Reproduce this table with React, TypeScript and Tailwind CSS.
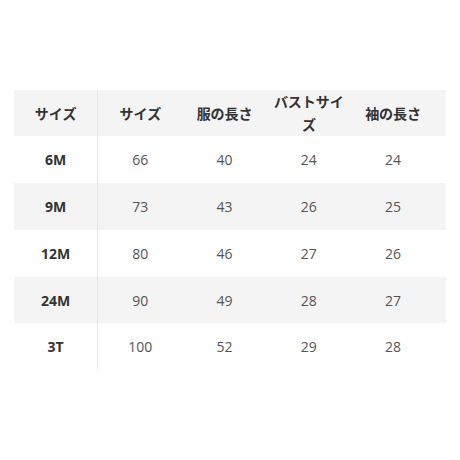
import React from "react";

const header = ["サイズ", "サイズ", "服の長さ", "バストサイズ", "袖の長さ"];
const rows = [
  ["6M", "66", "40", "24", "24"],
  ["9M", "73", "43", "26", "25"],
  ["12M", "80", "46", "27", "26"],
  ["24M", "90", "49", "28", "27"],
  ["3T", "100", "52", "29", "28"],
];
const heights = ["h-[47px]", "h-[47px]", "h-[47px]", "h-[46px]", "h-[47px]"];

export default function App() {
  return (
    <div
      className="w-[460px] h-[460px] bg-white pt-[90px] pl-[14px]"
      style={{ fontFamily: '"Open Sans", "Noto Sans CJK JP", sans-serif' }}
    >
      <div className="w-[432px] flex flex-col">
        <div className="flex h-[46px] bg-[#f4f4f4] text-[14px] font-bold text-[#333] leading-[23px]">
          {header.map((h, i) => (
            <div
              key={i}
              className={`w-[84.25px] shrink-0 flex items-center justify-center text-center px-[6px] ${
                i === 0 ? "border-r border-[#e6e6e6]" : ""
              }`}
            >
              {h === "バストサイズ" ? (
                <span>
                  バストサイ
                  <br />ズ
                </span>
              ) : (
                h
              )}
            </div>
          ))}
        </div>
        {rows.map((r, ri) => (
          <div
            key={ri}
            className={`flex ${heights[ri]} ${ri % 2 === 1 ? "bg-[#f4f4f4]" : "bg-white"}`}
          >
            {r.map((c, ci) => (
              <div
                key={ci}
                className={`w-[84.25px] shrink-0 flex items-center justify-center text-[14px] ${
                  ci === 0
                    ? "font-bold text-[#333] border-r border-[#e6e6e6]"
                    : "text-[#555]"
                }`}
              >
                {c}
              </div>
            ))}
          </div>
        ))}
      </div>
    </div>
  );
}
